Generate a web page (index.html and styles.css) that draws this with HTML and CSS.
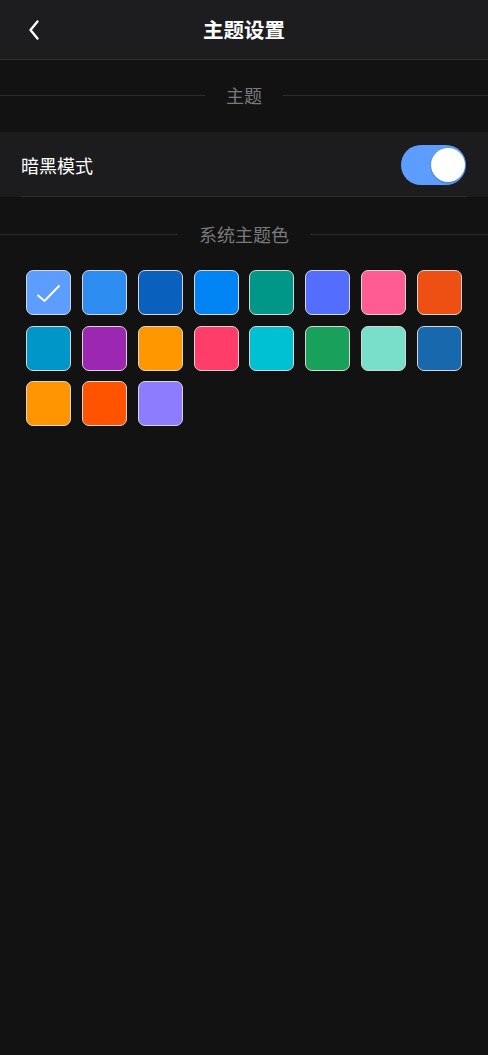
FILE: index.html
```html
<!DOCTYPE html>
<html lang="zh-CN">
<head>
<meta charset="utf-8">
<title>主题设置</title>
<link rel="stylesheet" href="styles.css">
</head>
<body>
<div class="page">
  <header class="navbar">
    <span class="back">
      <svg width="24" height="24" viewBox="0 0 24 24"><path d="M14.5 3.5 L7.5 12 L14.5 20.5" fill="none" stroke="#fff" stroke-width="2.4" stroke-linecap="round" stroke-linejoin="round"/></svg>
    </span>
    <h1 class="title">主题设置</h1>
  </header>

  <div class="divider divider-first"><span class="divider-text">主题</span></div>

  <div class="cell">
    <div class="cell-inner">
      <span class="cell-label">暗黑模式</span>
      <span class="switch"><span class="knob"></span></span>
    </div>
  </div>

  <div class="divider"><span class="divider-text">系统主题色</span></div>

  <div class="colors">
    <div class="color-item"><span class="swatch" style="background:#5c9dff"><svg width="45" height="45" viewBox="0 0 45 45"><path d="M11.5 25 L18.5 31 L33.5 15.5" fill="none" stroke="#fff" stroke-width="2"/></svg></span></div>
    <div class="color-item"><span class="swatch" style="background:#2d8cf0"></span></div>
    <div class="color-item"><span class="swatch" style="background:#0960bd"></span></div>
    <div class="color-item"><span class="swatch" style="background:#0084f4"></span></div>
    <div class="color-item"><span class="swatch" style="background:#009688"></span></div>
    <div class="color-item"><span class="swatch" style="background:#536dfe"></span></div>
    <div class="color-item"><span class="swatch" style="background:#ff5c93"></span></div>
    <div class="color-item"><span class="swatch" style="background:#ee4f12"></span></div>
    <div class="color-item"><span class="swatch" style="background:#0096c7"></span></div>
    <div class="color-item"><span class="swatch" style="background:#9c27b0"></span></div>
    <div class="color-item"><span class="swatch" style="background:#ff9800"></span></div>
    <div class="color-item"><span class="swatch" style="background:#ff3d68"></span></div>
    <div class="color-item"><span class="swatch" style="background:#00c1d4"></span></div>
    <div class="color-item"><span class="swatch" style="background:#19a15b"></span></div>
    <div class="color-item"><span class="swatch" style="background:#78e0ca"></span></div>
    <div class="color-item"><span class="swatch" style="background:#1868ae"></span></div>
    <div class="color-item"><span class="swatch" style="background:#ff9500"></span></div>
    <div class="color-item"><span class="swatch" style="background:#ff5300"></span></div>
    <div class="color-item"><span class="swatch" style="background:#8e7cff"></span></div>
  </div>
</div>
</body>
</html>
```

FILE: styles.css
```css
* { box-sizing: border-box; }
html, body {
  margin: 0;
  padding: 0;
  background: #121212;
}
body {
  font-family: "Noto Sans CJK SC", "Noto Sans", sans-serif;
  color: #fff;
  min-height: 1055px;
}
.page {
  width: 488px;
  min-height: 1055px;
  background: #121212;
}
.navbar {
  position: relative;
  height: 60px;
  background: #1d1d20;
  border-bottom: 1px solid #303033;
  display: flex;
  align-items: center;
  justify-content: center;
}
.back {
  position: absolute;
  left: 23px;
  top: 18px;
  width: 24px;
  height: 24px;
  display: flex;
}
.title {
  margin: 0;
  font-size: 20.5px;
  font-weight: 700;
  line-height: 24px;
  color: #fff;
  margin-top: -2px;
}
.divider {
  display: flex;
  align-items: center;
  height: 24px;
  margin: 25px 0 25px;
}
.divider-first {
  margin-top: 23px;
}
.divider::before,
.divider::after {
  content: "";
  flex: 1;
  height: 1px;
  background: #2b2b2d;
}
.divider-text {
  padding: 0 21px;
  font-size: 18px;
  line-height: 24px;
  color: #7a7a7c;
}
.cell {
  background: #1c1c1f;
  height: 65px;
  padding: 0 21px 0 21px;
}
.cell-inner {
  height: 65px;
  display: flex;
  align-items: center;
  justify-content: space-between;
  border-bottom: 1px solid #2d2d30;
  padding: 0 1px 0 0;
}
.cell-label {
  font-size: 18px;
  line-height: 24px;
  color: #fff;
  margin-top: 1px;
}
.switch {
  position: relative;
  width: 65px;
  height: 40px;
  border-radius: 20px;
  background: #5c9dff;
  margin-right: 0;
  margin-top: 1px;
}
.knob {
  position: absolute;
  top: 3.5px;
  right: 1.5px;
  width: 34px;
  height: 34px;
  border-radius: 50%;
  background: #fff;
  box-shadow: 0 1px 2px rgba(0,0,0,0.25);
}
.colors {
  display: flex;
  flex-wrap: wrap;
  padding: 0 21px;
  margin-top: -1px;
}
.color-item {
  width: 12.5%;
  height: 55.5px;
  display: flex;
  justify-content: center;
  padding-top: 0;
}
.swatch {
  display: block;
  width: 45px;
  height: 45px;
  border-radius: 7px;
  border: 1px solid #d6d6d6;
  overflow: hidden;
}
.swatch svg {
  display: block;
  margin: -1px;
}
```
